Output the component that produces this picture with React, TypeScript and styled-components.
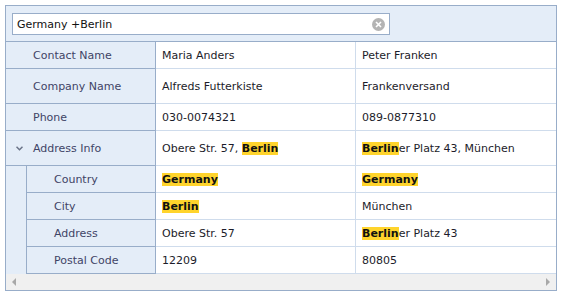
import React from 'react';
import styled, { createGlobalStyle } from 'styled-components';

const GlobalStyle = createGlobalStyle`
    body {
        margin: 0;
        background: #fff;
        font-family: "DejaVu Sans", Verdana, sans-serif;
        font-size: 11px;
    }
`;

const Grid = styled.div`
    margin: 5px;
    width: 552px;
    box-sizing: border-box;
    border: 1px solid #98adc9;
    background: #fff;
`;

const Toolbar = styled.div`
    height: 36px;
    box-sizing: border-box;
    padding: 7px 6px 0;
    background: #e4edf8;
    border-bottom: 1px solid #98adc9;
`;

const SearchBox = styled.div`
    width: 378px;
    height: 22px;
    box-sizing: border-box;
    border: 1px solid #98adc9;
    background: #fff;
    display: flex;
    align-items: center;
    padding: 0 4px 0 4px;
    color: #111;
`;

const SearchText = styled.span`
    flex: 1;
`;

const ClearButton = styled.span`
    width: 13px;
    height: 13px;
    border-radius: 50%;
    background: #b4b4b4;
    display: flex;
    align-items: center;
    justify-content: center;
`;

const Row = styled.div<{ $h: number }>`
    display: flex;
    height: ${(p) => p.$h}px;
`;

const Indent = styled.div`
    width: 20px;
    background: #e4edf8;
    border-right: 1px solid #98adc9;
`;

const HeaderCell = styled.div<{ $w: number; $pad: number }>`
    width: ${(p) => p.$w}px;
    box-sizing: border-box;
    background: #e4edf8;
    border-right: 1px solid #98adc9;
    border-bottom: 1px solid #98adc9;
    padding-left: ${(p) => p.$pad}px;
    display: flex;
    align-items: center;
    color: #3f4466;
`;

const Chevron = styled.span`
    width: 17px;
    display: flex;
    align-items: center;
`;

const ValueCell = styled.div<{ $last?: boolean }>`
    width: 200px;
    box-sizing: border-box;
    border-bottom: 1px solid #cfdcec;
    border-right: ${(p) => (p.$last ? 'none' : '1px solid #cfdcec')};
    padding-left: 6px;
    display: flex;
    align-items: center;
    color: #1c1c2a;
    white-space: nowrap;
`;

const Mark = styled.b`
    background: #ffd42c;
    color: #111;
`;

const ScrollBar = styled.div`
    height: 16px;
    background: #f0f0f0;
    display: flex;
    align-items: center;
    justify-content: space-between;
    padding: 0 6px 0 6px;
`;

const Arrow = styled.span<{ $dir: 'left' | 'right' }>`
    width: 0;
    height: 0;
    border-top: 4px solid transparent;
    border-bottom: 4px solid transparent;
    ${(p) => (p.$dir === 'left' ? 'border-right: 4px solid #a8a8a8;' : 'border-left: 4px solid #a8a8a8;')}
`;

type Cell = React.ReactNode;

interface RowData {
    label: string;
    h: number;
    nested?: boolean;
    expander?: boolean;
    values: [Cell, Cell];
}

const rows: RowData[] = [
    { label: 'Contact Name', h: 27, values: ['Maria Anders', 'Peter Franken'] },
    { label: 'Company Name', h: 35, values: ['Alfreds Futterkiste', 'Frankenversand'] },
    { label: 'Phone', h: 27, values: ['030-0074321', '089-0877310'] },
    {
        label: 'Address Info',
        h: 35,
        expander: true,
        values: [
            <>Obere Str. 57, <Mark>Berlin</Mark></>,
            <><Mark>Berlin</Mark>er Platz 43, München</>,
        ],
    },
    { label: 'Country', h: 27, nested: true, values: [<Mark>Germany</Mark>, <Mark>Germany</Mark>] },
    { label: 'City', h: 27, nested: true, values: [<Mark>Berlin</Mark>, 'München'] },
    { label: 'Address', h: 27, nested: true, values: ['Obere Str. 57', <><Mark>Berlin</Mark>er Platz 43</>] },
    { label: 'Postal Code', h: 27, nested: true, values: ['12209', '80805'] },
];

const App: React.FC = () => {
    return (
        <>
            <GlobalStyle />
            <Grid>
                <Toolbar>
                    <SearchBox>
                        <SearchText>Germany +Berlin</SearchText>
                        <ClearButton>
                            <svg width="7" height="7" viewBox="0 0 7 7">
                                <path d="M1 1L6 6M6 1L1 6" stroke="#fff" strokeWidth="1.6" />
                            </svg>
                        </ClearButton>
                    </SearchBox>
                </Toolbar>
                {rows.map((r) => (
                    <Row key={r.label} $h={r.h}>
                        {r.nested && <Indent />}
                        <HeaderCell $w={r.nested ? 129 : 150} $pad={r.nested ? 27 : r.expander ? 10 : 27}>
                            {r.expander && (
                                <Chevron>
                                    <svg width="7" height="5" viewBox="0 0 7 5">
                                        <path d="M0.5 0.8L3.5 3.8L6.5 0.8" stroke="#6a7388" strokeWidth="1.5" fill="none" />
                                    </svg>
                                </Chevron>
                            )}
                            {r.label}
                        </HeaderCell>
                        <ValueCell><span>{r.values[0]}</span></ValueCell>
                        <ValueCell $last><span>{r.values[1]}</span></ValueCell>
                    </Row>
                ))}
                <ScrollBar>
                    <Arrow $dir="left" />
                    <Arrow $dir="right" />
                </ScrollBar>
            </Grid>
        </>
    );
};

export default App;
